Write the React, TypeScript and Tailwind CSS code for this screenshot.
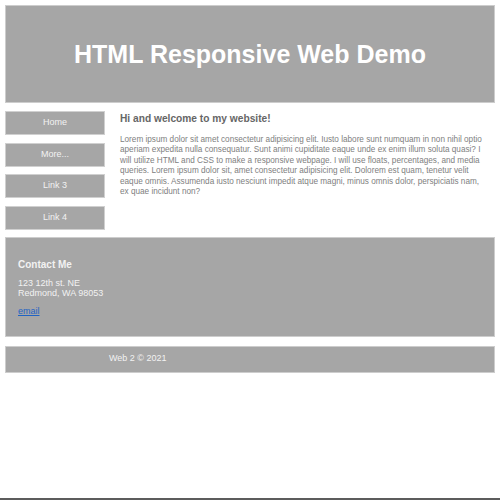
import React from "react";

export default function App() {
  const links = ["Home", "More...", "Link 3", "Link 4"];
  return (
    <div
      className="relative h-[500px] w-[500px] overflow-hidden bg-white"
      style={{ fontFamily: '"Liberation Sans", Arial, sans-serif' }}
    >
      <div className="px-[5px] pt-[5px]">
        <header className="flex h-[98px] items-center justify-center border border-[#cdcdcd] bg-[#a6a6a6]">
          <h1 className="text-[25px] font-bold leading-none text-white">HTML Responsive Web Demo</h1>
        </header>

        <div className="mt-[8px] flex">
          <nav className="flex w-[100px] flex-col gap-[7.5px]">
            {links.map((l) => (
              <div
                key={l}
                className="flex h-[24px] items-center justify-center border border-[#d0d0d0] bg-[#a6a6a6] text-[9px] text-[#f2f2f2]"
              >
                {l}
              </div>
            ))}
          </nav>
          <main className="ml-[15px] flex-1 pr-[4px]">
            <h2 className="mt-[1px] text-[10.2px] font-bold leading-[14px] text-[#666]">Hi and welcome to my website!</h2>
            <p className="mt-[9px] text-[8.2px] leading-[10.4px] text-[#808080]">
              Lorem ipsum dolor sit amet consectetur adipisicing elit. Iusto labore sunt numquam in non nihil optio
              aperiam expedita nulla consequatur. Sunt animi cupiditate eaque unde ex enim illum soluta quasi? I will
              utilize HTML and CSS to make a responsive webpage. I will use floats, percentages, and media queries. Lorem
              ipsum dolor sit, amet consectetur adipisicing elit. Dolorem est quam, tenetur velit eaque omnis. Assumenda
              iusto nesciunt impedit atque magni, minus omnis dolor, perspiciatis nam,
              <br />
              ex quae incidunt non?
            </p>
          </main>
        </div>

        <section className="mt-[7px] h-[100px] border border-[#cdcdcd] bg-[#a6a6a6] px-[12px] pt-[21px] text-[#f2f2f2]">
          <h3 className="text-[10px] font-bold leading-[12px]">Contact Me</h3>
          <p className="mt-[7px] text-[9px] leading-[10px]">
            123 12th st. NE
            <br />
            Redmond, WA 98053
          </p>
          <a href="#" className="mt-[8px] block text-[9px] leading-[10px] text-[#1f63c4] underline">
            email
          </a>
        </section>

        <footer className="mt-[9px] flex h-[27px] items-center border border-[#cdcdcd] bg-[#a6a6a6] pl-[103px] text-[9px] text-[#f2f2f2]">
          Web 2 © 2021
        </footer>
      </div>
      <div className="absolute bottom-0 left-0 h-[2px] w-full bg-[#5c5c5c]" />
    </div>
  );
}
